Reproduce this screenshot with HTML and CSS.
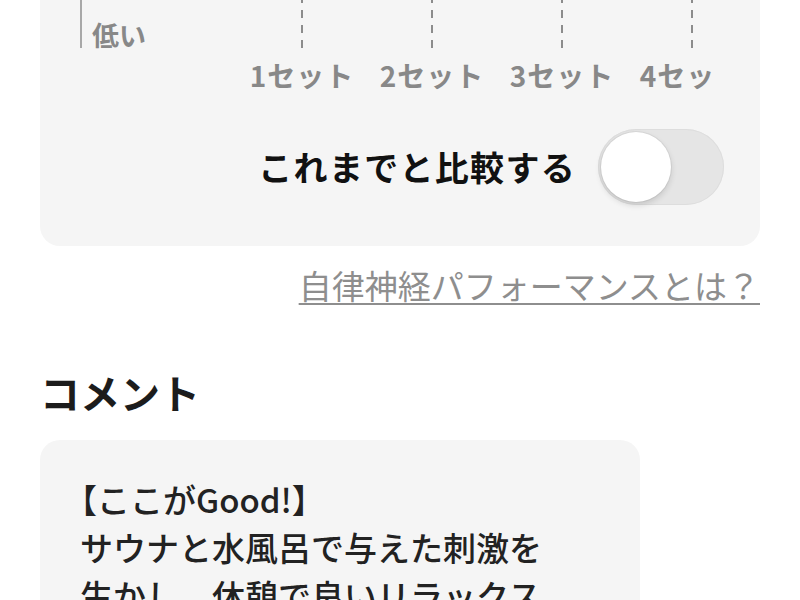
FILE: index.html
```html
<!DOCTYPE html>
<html lang="ja">
<head>
<meta charset="utf-8">
<title>自律神経パフォーマンス</title>
<link rel="stylesheet" href="styles.css">
</head>
<body>
<main class="page">
  <section class="card chart-card">
    <div class="chart">
      <div class="plot">
        <div class="y-label">低い</div>
        <div class="col"></div>
        <div class="col"></div>
        <div class="col"></div>
        <div class="col"></div>
      </div>
      <div class="x-labels">
        <div class="spacer"></div>
        <div class="x-label">1セット</div>
        <div class="x-label">2セット</div>
        <div class="x-label">3セット</div>
        <div class="x-label">4セット</div>
      </div>
    </div>
    <div class="compare-row">
      <span class="compare-text">これまでと比較する</span>
      <span class="toggle" role="switch" aria-checked="false"><span class="knob"></span></span>
    </div>
  </section>

  <div class="link-row">
    <a class="help-link" href="#">自律神経パフォーマンスとは？</a>
  </div>

  <h2 class="section-title">コメント</h2>

  <section class="card comment-card">
    <p class="comment-text">【ここがGood!】<br>サウナと水風呂で与えた刺激を生かし、休憩で良いリラックス</p>
  </section>
</main>
</body>
</html>
```

FILE: styles.css
```css
* {
  box-sizing: border-box;
}

html, body {
  margin: 0;
  padding: 0;
  background: #ffffff;
}

body {
  width: 800px;
  height: 600px;
  overflow: hidden;
  font-family: "Noto Sans CJK JP", "Noto Sans", sans-serif;
  color: #1a1a1a;
}

.page {
  padding: 0 40px;
}

.card {
  background: #f5f5f5;
  border-radius: 20px;
}

.chart-card {
  margin-top: -24px;
  padding: 24px 36px 41px 40px;
}

.chart {
  overflow: hidden;
  margin-right: 4px;
}

.plot {
  display: grid;
  grid-template-columns: 155px repeat(4, 130px);
  height: 48px;
  border-left: 2px solid #a8a8a8;
}

.y-label {
  align-self: end;
  padding-left: 10px;
  font-size: 27px;
  line-height: 27px;
  font-weight: 700;
  color: #888888;
  white-space: nowrap;
}

.col {
  background-image: repeating-linear-gradient(to top, #8c8c8c 0 8px, transparent 8px 15px);
  background-size: 2px 100%;
  background-position: center bottom;
  background-repeat: no-repeat;
}

.x-labels {
  display: grid;
  grid-template-columns: 157px repeat(4, 130px);
  margin-top: 7px;
}

.x-label {
  text-align: center;
  font-size: 28px;
  line-height: 40px;
  font-weight: 700;
  color: #888888;
  letter-spacing: 1px;
  white-space: nowrap;
}

.compare-row {
  display: flex;
  justify-content: flex-end;
  align-items: center;
  gap: 22px;
  margin-top: 34px;
}

.compare-text {
  font-size: 34px;
  line-height: 44px;
  font-weight: 700;
  letter-spacing: 1.3px;
  color: #111111;
}

.toggle {
  display: flex;
  align-items: center;
  width: 126px;
  height: 76px;
  padding: 0 3px;
  border-radius: 38px;
  background: #e5e5e5;
  box-shadow: inset 0 0 0 1px #dddddd;
}

.knob {
  width: 70px;
  height: 70px;
  border-radius: 50%;
  background: #ffffff;
  box-shadow: 0 3px 6px rgba(0, 0, 0, 0.14), 0 0 0 1px rgba(0, 0, 0, 0.05);
}

.link-row {
  display: flex;
  justify-content: flex-end;
  margin-top: 19px;
}

.help-link {
  font-size: 33px;
  line-height: 40px;
  color: #8e8e8e;
  text-decoration: underline;
  text-decoration-thickness: 2px;
  text-underline-offset: 4px;
}

.section-title {
  margin: 59px 0 0;
  font-size: 40px;
  line-height: 56px;
  font-weight: 700;
  color: #1c1c1c;
}

.comment-card {
  width: 600px;
  margin-top: 20px;
  padding: 35px 80px 35px 40px;
}

.comment-text {
  margin: 0;
  text-indent: -16px;
  font-size: 33px;
  line-height: 48px;
  font-weight: 500;
  color: #222222;
}
```
